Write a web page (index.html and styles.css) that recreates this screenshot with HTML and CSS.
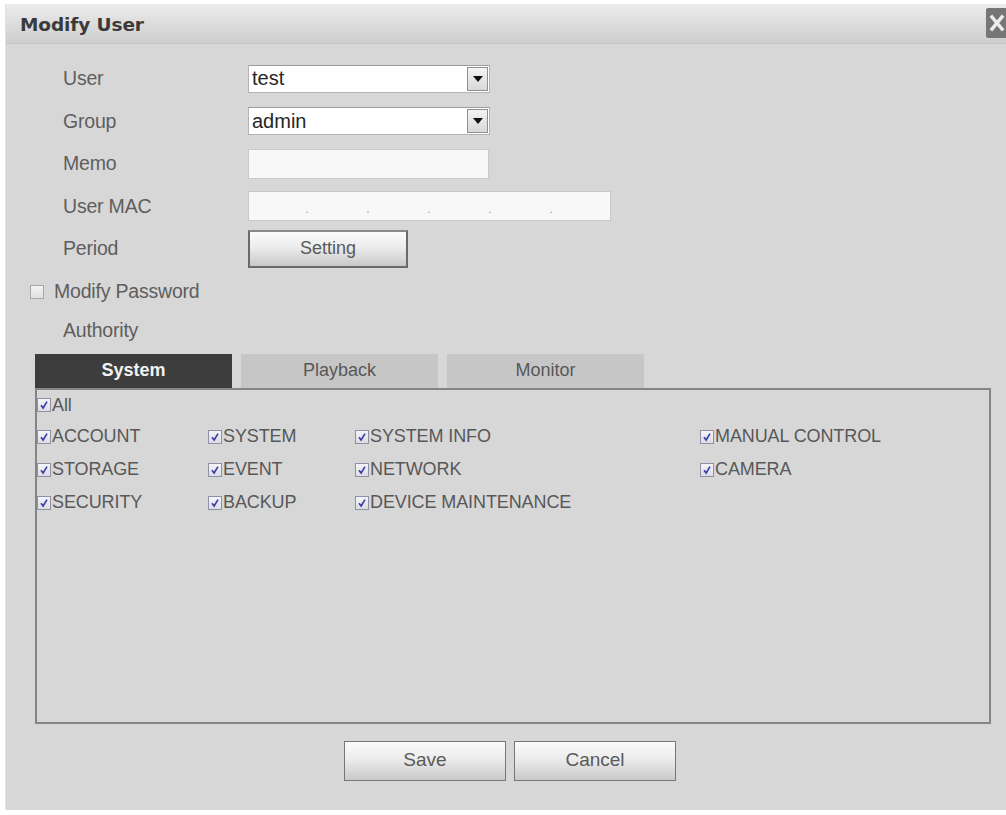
FILE: index.html
```html
<!DOCTYPE html>
<html>
<head>
<meta charset="utf-8">
<link rel="stylesheet" href="styles.css">
</head>
<body>
<div class="dialog">
  <div class="titlebar">
    <span class="title">Modify User</span>
    <span class="close"><svg width="28" height="30" viewBox="0 0 28 30"><path d="M6 9 L16 21 M16 9 L6 21" stroke="#ececec" stroke-width="3.5" stroke-linecap="square"/></svg></span>
  </div>

  <div class="form">
    <div class="row">
      <span class="label">User</span>
      <div class="select"><span class="val">test</span><span class="arrow"><svg width="10" height="6" viewBox="0 0 10 6"><path d="M0 0 H10 L5 6 Z" fill="#111"/></svg></span></div>
    </div>
    <div class="row">
      <span class="label">Group</span>
      <div class="select"><span class="val">admin</span><span class="arrow"><svg width="10" height="6" viewBox="0 0 10 6"><path d="M0 0 H10 L5 6 Z" fill="#111"/></svg></span></div>
    </div>
    <div class="row">
      <span class="label">Memo</span>
      <div class="input memo"></div>
    </div>
    <div class="row">
      <span class="label">User MAC</span>
      <div class="input mac">
        <span class="seg"></span><span class="dot">.</span>
        <span class="seg"></span><span class="dot">.</span>
        <span class="seg"></span><span class="dot">.</span>
        <span class="seg"></span><span class="dot">.</span>
        <span class="seg"></span><span class="dot">.</span>
        <span class="seg"></span>
      </div>
    </div>
    <div class="row">
      <span class="label">Period</span>
      <button class="btn setting">Setting</button>
    </div>
  </div>

  <div class="check-row">
    <span class="box empty"></span>
    <span class="label">Modify Password</span>
  </div>
  <div class="authority"><span class="label">Authority</span></div>

  <div class="tabs">
    <div class="tab active">System</div>
    <div class="tab">Playback</div>
    <div class="tab">Monitor</div>
  </div>

  <div class="panel">
    <div class="perm-grid">
      <label class="perm all"><span class="box"><svg viewBox="0 0 14 14"><path d="M3.5 7.2 L6 10.5 L10.5 3" stroke="#3c3ca8" stroke-width="1.9" fill="none"/></svg></span>All</label>

      <label class="perm"><span class="box"><svg viewBox="0 0 14 14"><path d="M3.5 7.2 L6 10.5 L10.5 3" stroke="#3c3ca8" stroke-width="1.9" fill="none"/></svg></span>ACCOUNT</label>
      <label class="perm"><span class="box"><svg viewBox="0 0 14 14"><path d="M3.5 7.2 L6 10.5 L10.5 3" stroke="#3c3ca8" stroke-width="1.9" fill="none"/></svg></span>SYSTEM</label>
      <label class="perm"><span class="box"><svg viewBox="0 0 14 14"><path d="M3.5 7.2 L6 10.5 L10.5 3" stroke="#3c3ca8" stroke-width="1.9" fill="none"/></svg></span>SYSTEM INFO</label>
      <label class="perm"><span class="box"><svg viewBox="0 0 14 14"><path d="M3.5 7.2 L6 10.5 L10.5 3" stroke="#3c3ca8" stroke-width="1.9" fill="none"/></svg></span>MANUAL CONTROL</label>

      <label class="perm"><span class="box"><svg viewBox="0 0 14 14"><path d="M3.5 7.2 L6 10.5 L10.5 3" stroke="#3c3ca8" stroke-width="1.9" fill="none"/></svg></span>STORAGE</label>
      <label class="perm"><span class="box"><svg viewBox="0 0 14 14"><path d="M3.5 7.2 L6 10.5 L10.5 3" stroke="#3c3ca8" stroke-width="1.9" fill="none"/></svg></span>EVENT</label>
      <label class="perm"><span class="box"><svg viewBox="0 0 14 14"><path d="M3.5 7.2 L6 10.5 L10.5 3" stroke="#3c3ca8" stroke-width="1.9" fill="none"/></svg></span>NETWORK</label>
      <label class="perm"><span class="box"><svg viewBox="0 0 14 14"><path d="M3.5 7.2 L6 10.5 L10.5 3" stroke="#3c3ca8" stroke-width="1.9" fill="none"/></svg></span>CAMERA</label>

      <label class="perm"><span class="box"><svg viewBox="0 0 14 14"><path d="M3.5 7.2 L6 10.5 L10.5 3" stroke="#3c3ca8" stroke-width="1.9" fill="none"/></svg></span>SECURITY</label>
      <label class="perm"><span class="box"><svg viewBox="0 0 14 14"><path d="M3.5 7.2 L6 10.5 L10.5 3" stroke="#3c3ca8" stroke-width="1.9" fill="none"/></svg></span>BACKUP</label>
      <label class="perm"><span class="box"><svg viewBox="0 0 14 14"><path d="M3.5 7.2 L6 10.5 L10.5 3" stroke="#3c3ca8" stroke-width="1.9" fill="none"/></svg></span>DEVICE MAINTENANCE</label>
    </div>
  </div>

  <div class="actions">
    <button class="btn action">Save</button>
    <button class="btn action">Cancel</button>
  </div>
</div>
</body>
</html>
```

FILE: styles.css
```css
html, body {
  margin: 0;
  padding: 0;
  background: #ffffff;
  overflow: hidden;
}

body {
  width: 1006px;
  height: 815px;
  font-family: "Liberation Sans", Arial, sans-serif;
}

.dialog {
  margin: 4px 0 0 5px;
  width: 1001px;
  height: 806px;
  background: #d7d7d7;
  overflow: hidden;
  box-sizing: border-box;
  border-left: 1px solid #e2e2e2;
}

.titlebar {
  position: relative;
  height: 40px;
  box-sizing: border-box;
  background: linear-gradient(#ececec, #cecece);
  border-bottom: 1px solid #c4c4c4;
  display: flex;
  align-items: center;
  padding-left: 14px;
}

.title {
  font-family: "DejaVu Sans", Verdana, sans-serif;
  font-weight: bold;
  font-size: 18.5px;
  color: #3a3a3a;
  letter-spacing: -0.1px;
  padding-top: 1px;
}

.close {
  position: absolute;
  right: -8px;
  top: 4px;
  width: 28px;
  height: 30px;
  background: #767676;
  border-radius: 2px;
  display: block;
}

.close svg {
  display: block;
}

.form {
  padding-top: 13.5px;
}

.row {
  height: 42.5px;
  display: flex;
  align-items: center;
}

.label {
  font-size: 19.5px;
  color: #5e5e5e;
  letter-spacing: -0.2px;
}

.row .label {
  width: 185px;
  padding-left: 57px;
  flex: none;
}

.select {
  width: 242px;
  height: 28px;
  box-sizing: border-box;
  background: #ffffff;
  border: 1px solid #b4b4b4;
  border-top-color: #9c9c9c;
  display: flex;
  align-items: center;
  justify-content: space-between;
}

.select .val {
  font-size: 20px;
  color: #262626;
  padding-left: 3px;
}

.select .arrow {
  width: 21px;
  height: 24px;
  margin-right: 1px;
  box-sizing: border-box;
  border: 1px solid #8f8f8f;
  background: linear-gradient(#f4f4f4, #d8d8d8);
  display: flex;
  align-items: center;
  justify-content: center;
}

.input {
  height: 30px;
  box-sizing: border-box;
  background: #f8f8f8;
  border: 1px solid #c9c9c9;
}

.memo {
  width: 241px;
}

.mac {
  width: 363px;
  display: flex;
  align-items: center;
}

.mac .seg {
  width: 55px;
}

.mac .dot {
  width: 6px;
  text-align: center;
  font-size: 12px;
  color: #9a9a9a;
  padding-top: 6px;
}

.btn {
  font-family: "Liberation Sans", Arial, sans-serif;
  color: #5a5a5a;
  background: linear-gradient(#fbfbfb 0%, #ececec 45%, #c9c9c9 100%);
  border: 1px solid #737373;
  box-sizing: border-box;
  padding: 0;
  cursor: default;
}

.setting {
  width: 160px;
  height: 38px;
  font-size: 18px;
  border: 2px solid #6a6a6a;
  border-top-color: #8a8a8a;
}

.check-row {
  height: 43px;
  display: flex;
  align-items: center;
  padding-left: 24px;
}

.check-row .box {
  margin-right: 10px;
}

.box {
  width: 14px;
  height: 14px;
  box-sizing: border-box;
  border: 1px solid #8f8fa6;
  background: linear-gradient(#f4f4f8, #dcdce6);
  display: inline-block;
  flex: none;
}

.box svg {
  display: block;
  width: 12px;
  height: 12px;
}

.box.empty {
  border-color: #a8a8a8;
  background: linear-gradient(#f2f2f2, #e0e0e0);
}

.authority {
  height: 34px;
  display: flex;
  align-items: center;
  padding-left: 57px;
}

.tabs {
  margin-top: 7px;
  margin-left: 29px;
  height: 34px;
  display: flex;
  gap: 9px;
}

.tab {
  width: 197px;
  height: 34px;
  background: #c6c6c6;
  color: #585858;
  font-size: 18px;
  display: flex;
  align-items: center;
  justify-content: center;
  padding-bottom: 2px;
  box-sizing: border-box;
}

.tab.active {
  background: #3d3d3d;
  color: #f2f2f2;
  font-weight: bold;
}

.panel {
  margin-left: 29px;
  width: 956px;
  height: 336px;
  box-sizing: border-box;
  border: 2px solid #858585;
}

.perm-grid {
  display: grid;
  grid-template-columns: 171px 147px 345px 1fr;
  grid-template-rows: 30px 33px 33px 33px;
}

.perm {
  display: flex;
  align-items: center;
  font-size: 18px;
  color: #585858;
  letter-spacing: -0.1px;
}

.perm .box {
  margin-right: 1px;
}

.perm.all {
  grid-column: 1 / -1;
}

.actions {
  margin-top: 17px;
  padding-left: 338px;
  display: flex;
  gap: 8px;
}

.action {
  width: 162px;
  height: 40px;
  font-size: 19px;
  border-color: #777777;
  padding-bottom: 3px;
}
```
